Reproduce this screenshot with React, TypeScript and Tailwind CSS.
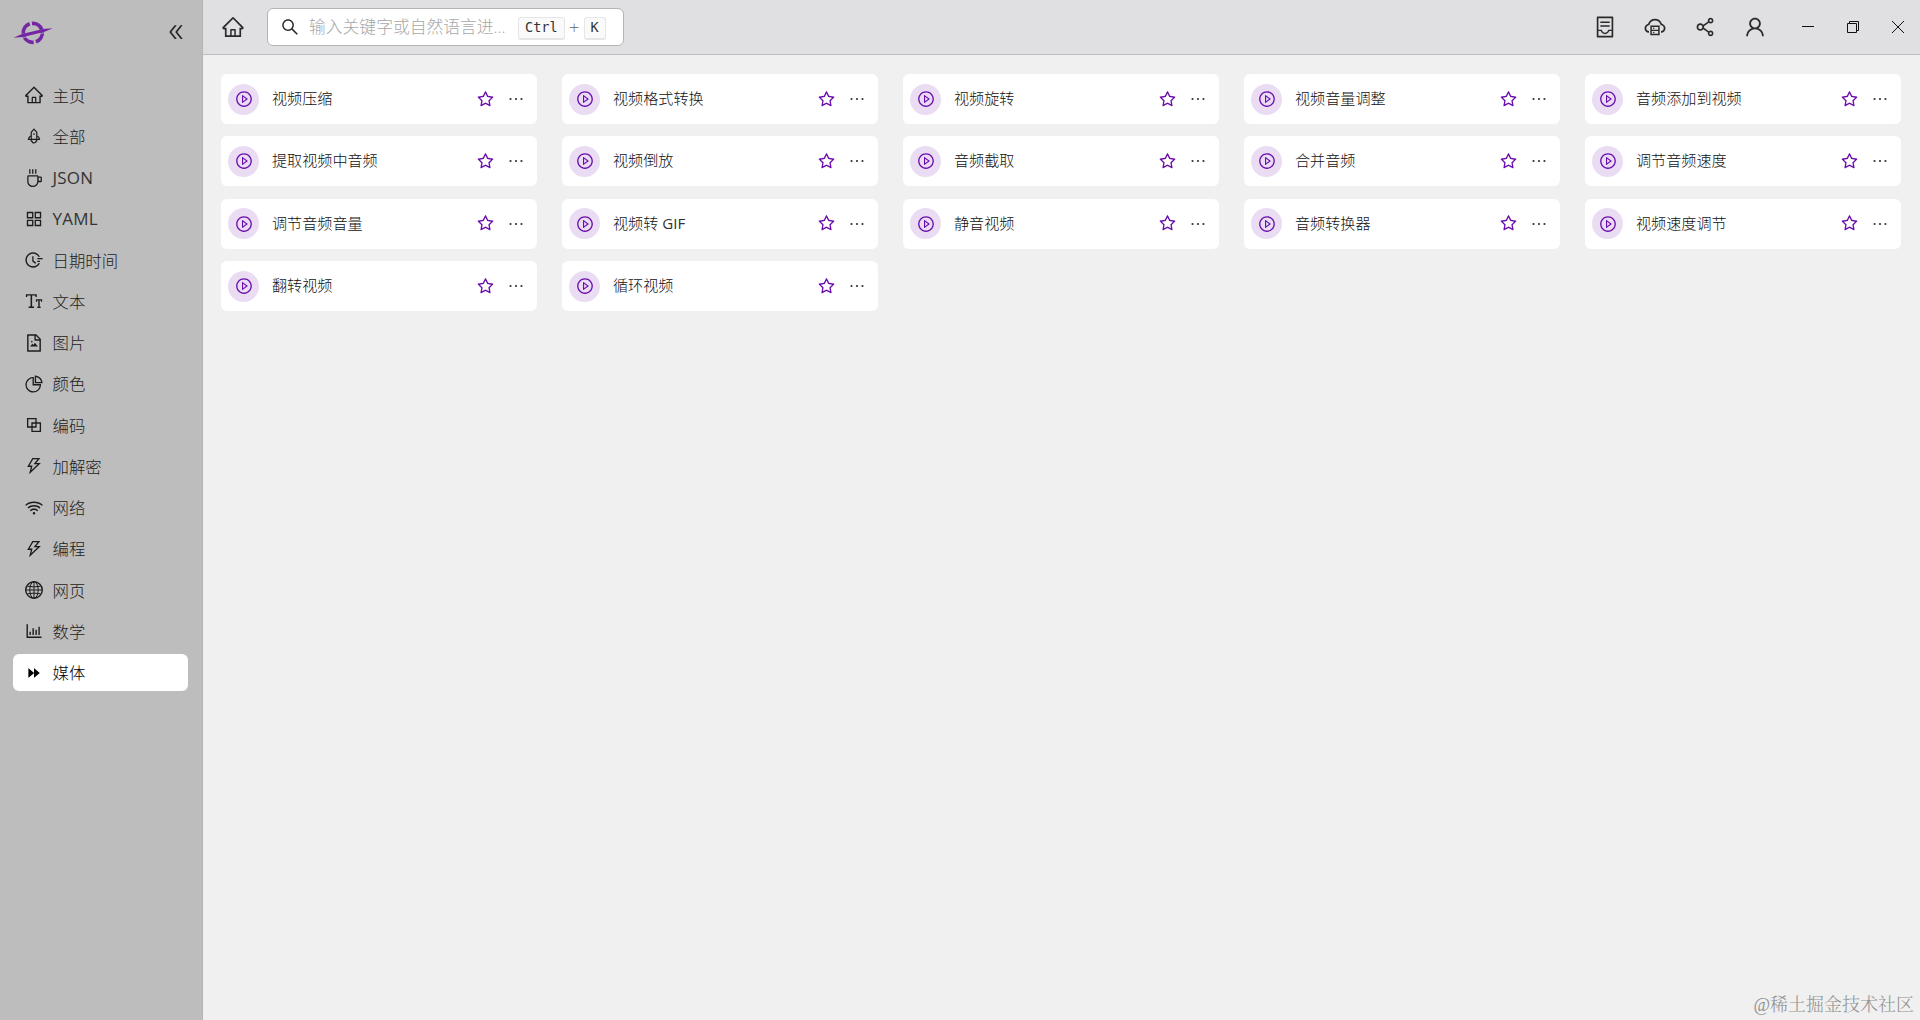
import { ReactNode } from "react";
import { IconType } from "react-icons";
import {
  AiFillForward,
  AiOutlineAppstore,
  AiOutlineBarChart,
  AiOutlineBlock,
  AiOutlineCloudServer,
  AiOutlineCoffee,
  AiOutlineContainer,
  AiOutlineDoubleLeft,
  AiOutlineEllipsis,
  AiOutlineFieldTime,
  AiOutlineFileImage,
  AiOutlineFontSize,
  AiOutlineHome,
  AiOutlinePieChart,
  AiOutlinePlayCircle,
  AiOutlineRocket,
  AiOutlineSearch,
  AiOutlineShareAlt,
  AiOutlineStar,
  AiOutlineThunderbolt,
  AiOutlineUser,
  AiOutlineWifi,
} from "react-icons/ai";

const GlobeIcon: IconType = ({ className }) => (
  <svg
    viewBox="-1 -1 20 20"
    fill="none"
    stroke="currentColor"
    strokeWidth="1"
    className={className}
  >
    <circle cx="9" cy="9" r="8.3" strokeWidth="1.4" />
    <ellipse cx="9" cy="9" rx="4.2" ry="8.3" />
    <path d="M9 1v16M1 9h16M2.4 5.2q6.6 1.4 13.2 0M2.4 12.8q6.6 -1.4 13.2 0" />
  </svg>
);

const menu: { label: string; icon: IconType; small?: boolean }[] = [
  { label: "主页", icon: AiOutlineHome },
  { label: "全部", icon: AiOutlineRocket, small: true },
  { label: "JSON", icon: AiOutlineCoffee, small: true },
  { label: "YAML", icon: AiOutlineAppstore },
  { label: "日期时间", icon: AiOutlineFieldTime },
  { label: "文本", icon: AiOutlineFontSize },
  { label: "图片", icon: AiOutlineFileImage },
  { label: "颜色", icon: AiOutlinePieChart },
  { label: "编码", icon: AiOutlineBlock },
  { label: "加解密", icon: AiOutlineThunderbolt },
  { label: "网络", icon: AiOutlineWifi },
  { label: "编程", icon: AiOutlineThunderbolt },
  { label: "网页", icon: GlobeIcon },
  { label: "数学", icon: AiOutlineBarChart },
  { label: "媒体", icon: AiFillForward, small: true },
];

const tools = [
  "视频压缩",
  "视频格式转换",
  "视频旋转",
  "视频音量调整",
  "音频添加到视频",
  "提取视频中音频",
  "视频倒放",
  "音频截取",
  "合并音频",
  "调节音频速度",
  "调节音频音量",
  "视频转 GIF",
  "静音视频",
  "音频转换器",
  "视频速度调节",
  "翻转视频",
  "循环视频",
];

function Logo() {
  return (
    <svg viewBox="0 0 40 26" width="40" height="26" fill="none">
      <circle
        cx="19.8"
        cy="12.8"
        r="9.5"
        stroke="#7526a3"
        strokeWidth="3.7"
        pathLength="100"
        strokeDasharray="21 4"
        strokeDashoffset="-2"
        transform="rotate(-12 19.8 12.8)"
      />
      <path
        d="M0.3 17.8 L9 14 L30 8.9 L39.8 8.2 L31 12 L10 17 Z"
        fill="#7526a3"
      />
      <path d="M8 18.2 L19 16 L31 12.8" stroke="#bdbdbd" strokeWidth="0.7" />
    </svg>
  );
}

function Sidebar() {
  return (
    <aside className="w-[203px] shrink-0 bg-[#bdbdbd] border-r border-[#b5b5b5] pl-[13px] pr-[14px]">
      <div className="h-[76px] flex items-start justify-between pt-[20px]">
        <Logo />
        <AiOutlineDoubleLeft className="size-[20px] mt-[2px] mr-[2px] text-[#222]" />
      </div>
      <nav className="flex flex-col gap-[4.25px] pt-[0.5px]">
        {menu.map(({ label, icon: Icon, small }) => {
          const active = label === "媒体";
          const latin = /^[A-Z]+$/.test(label);
          return (
            <div
              key={label}
              className={
                active
                  ? "h-[37px] flex items-center gap-[8px] pl-[10.5px] rounded-md bg-white text-black"
                  : "h-[37px] flex items-center gap-[8px] pl-[10.5px] rounded-md text-[#1c1c1c]"
              }
            >
              <span className="w-[21px] shrink-0 flex justify-center">
                <Icon
                  className={small ? "size-[18px] mr-px" : "size-[20px] mr-px"}
                />
              </span>
              <span
                className={
                  latin
                    ? "text-[17px] leading-none font-normal tracking-[0.2px] text-[#333]"
                    : "pt-[1.5px] text-[16.4px] leading-none"
                }
              >
                {label}
              </span>
            </div>
          );
        })}
      </nav>
    </aside>
  );
}

function Key({ children }: { children: ReactNode }) {
  return (
    <kbd className="h-[23px] mt-[2px] px-[6px] flex items-center rounded-[3px] border border-b-2 border-[#e6e6e6] bg-[#fafafa] font-['DejaVu_Sans_Mono',monospace] text-[13.5px] leading-none text-[#333]">
      {children}
    </kbd>
  );
}

function Header() {
  return (
    <header className="h-[55px] shrink-0 flex items-center bg-[#e0e0e2] border-b border-[#bebebe] pl-[18px] pr-[14px]">
      <AiOutlineHome className="size-[24px] text-[#2a2a2a]" />
      <div className="ml-[22px] w-[357px] h-[38px] flex items-center rounded-md border border-[#b4b4b6] bg-white pl-[12px]">
        <AiOutlineSearch className="size-[20px] text-[#2a2a2a]" />
        <span className="ml-[9px] w-[209px] text-[16.8px] leading-none text-[#a8a8a8] whitespace-nowrap">
          输入关键字或自然语言进...
        </span>
        <Key>Ctrl</Key>
        <span className="w-[19px] text-center text-lg leading-none text-[#777]">
          +
        </span>
        <Key>K</Key>
      </div>
      <div className="ml-auto flex items-center text-[#2a2a2a]">
        <div className="flex gap-[26px]">
          <AiOutlineContainer className="size-[24px]" />
          <AiOutlineCloudServer className="size-[24px]" />
          <AiOutlineShareAlt className="size-[24px]" />
          <AiOutlineUser className="size-[24px]" />
        </div>
        <svg
          viewBox="0 0 106 16"
          width="106"
          height="16"
          fill="none"
          stroke="#111"
          className="ml-[33px]"
        >
          <path d="M2 7.5h12" />
          <path d="M47.5 4.5h9v9h-9zM49.5 4.5v-2h9v9h-2" />
          <path d="M92 2l12 12M104 2L92 14" />
        </svg>
      </div>
    </header>
  );
}

function ToolCard({ name }: { name: string }) {
  // only the Chinese part of a name is set in the light weight
  const [, text, suffix] = name.match(/^([^A-Z]*)([A-Z]*)$/) ?? [];
  return (
    <div className="h-[50px] flex items-center rounded-md bg-white pl-[7px] pr-[11px]">
      <div className="size-[31px] flex items-center justify-center rounded-full bg-[#eaddf3]">
        <AiOutlinePlayCircle className="size-[18px] ml-px text-[#6a0dad]" />
      </div>
      <span className="ml-[13px] pb-px text-[15.1px] leading-none text-[#111]">
        {text}
        {suffix && <span className="font-normal text-[#333]">{suffix}</span>}
      </span>
      <AiOutlineStar className="ml-auto size-[19px] text-[#6a0dad]" />
      <AiOutlineEllipsis className="ml-[11px] size-[20px] text-[#333]" />
    </div>
  );
}

export default function App() {
  return (
    <div className="w-full h-screen flex overflow-hidden bg-[#f0f0f0] font-['Open_Sans','Noto_Sans_CJK_SC',sans-serif] font-light">
      <Sidebar />
      <div className="flex-1 flex flex-col">
        <Header />
        <main className="flex-1 flex flex-col justify-between pt-[19px] pl-[18px] pr-[19px]">
          <div className="grid grid-cols-5 gap-x-[25px] gap-y-[12.4px]">
            {tools.map((name) => (
              <ToolCard key={name} name={name} />
            ))}
          </div>
          <div className="self-end -mr-[13px] pb-[6px] font-['Liberation_Serif','Noto_Serif_CJK_SC','Noto_Sans_CJK_SC',serif] text-[18px] leading-none text-[#929292]">
            @稀土掘金技术社区
          </div>
        </main>
      </div>
    </div>
  );
}
